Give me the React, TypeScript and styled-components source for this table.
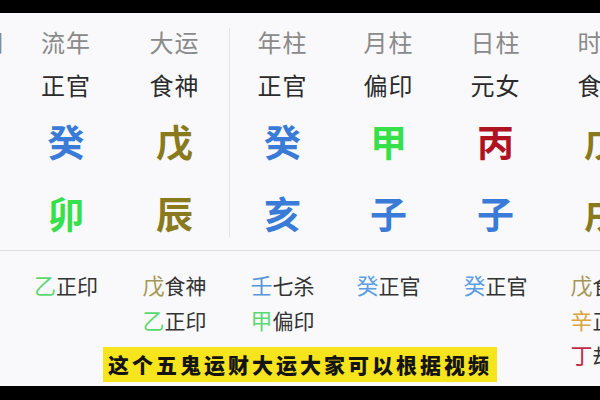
import React from "react";
import styled, { createGlobalStyle } from "styled-components";

const Global = createGlobalStyle`
  html, body { margin: 0; padding: 0; background: #000; }
  body { font-family: "Noto Sans CJK SC", "Noto Sans", sans-serif; }
`;

const Screen = styled.div`
  position: relative;
  width: 600px;
  height: 400px;
  overflow: hidden;
  background: #000;
  display: flex;
  flex-direction: column;
`;

const Bar = styled.div<{ $h: number }>`
  height: ${(p) => p.$h}px;
  flex: none;
  background: #000;
`;

const Content = styled.div`
  flex: 1;
  background: #f9f9fb;
  display: flex;
  flex-direction: column;
  overflow: hidden;
`;

const Upper = styled.div`
  height: 237px;
  flex: none;
  display: flex;
  margin-left: -96px;
  border-bottom: 1px solid #dedee2;
`;

const Column = styled.div<{ $w: number }>`
  width: ${(p) => p.$w}px;
  flex: none;
  display: flex;
  flex-direction: column;
  align-items: center;
`;

const Divider = styled.div`
  width: 1px;
  flex: none;
  margin-top: 15px;
  height: 209px;
  background: #e4e4e8;
`;

const Head = styled.div<{ $right?: boolean }>`
  height: 58px;
  line-height: 58px;
  font-size: 24px;
  color: #8a8a8a;
  letter-spacing: 1px;
  align-self: ${(p) => (p.$right ? "flex-end" : "center")};
  padding-right: ${(p) => (p.$right ? "8px" : "0")};
`;

const God = styled.div`
  height: 28px;
  line-height: 28px;
  font-size: 24px;
  color: #2b2b2b;
  letter-spacing: 1px;
`;

const Stem = styled.div<{ $c: string }>`
  height: 84px;
  line-height: 84px;
  font-size: 37px;
  font-weight: 700;
  color: ${(p) => p.$c};
`;

const Branch = styled.div<{ $c: string }>`
  height: 60px;
  line-height: 60px;
  font-size: 37px;
  font-weight: 700;
  color: ${(p) => p.$c};
`;

const Lower = styled.div`
  flex: 1;
  display: flex;
  margin-left: -96px;
  padding-top: 16px;
`;

const HiddenCol = styled.div<{ $w: number }>`
  width: ${(p) => p.$w}px;
  flex: none;
  display: flex;
  flex-direction: column;
  align-items: center;
`;

const HiddenRow = styled.div`
  height: 35px;
  line-height: 35px;
  font-size: 21px;
  color: #333;
  white-space: nowrap;
`;

const HStem = styled.span<{ $c: string }>`
  color: ${(p) => p.$c};
  font-size: 22px;
`;

const Subtitle = styled.div`
  position: absolute;
  left: 103px;
  top: 347px;
  width: 394px;
  height: 35px;
  background: #f6e41c;
  color: #141414;
  font-size: 21px;
  font-weight: 900;
  letter-spacing: 3px;
  line-height: 35px;
  text-align: center;
  white-space: nowrap;
`;

const C = {
  blue: "#3b7bd8",
  olive: "#8a7a1e",
  green: "#36e04a",
  red: "#b01222",
};

const H = {
  green: "#5cd873",
  olive: "#a69757",
  blue: "#5894d6",
  lblue: "#5c9ee4",
  gold: "#dba43e",
  crimson: "#c02c48",
};

type Pillar = {
  w: number;
  head: string;
  god: string;
  stem: [string, string];
  branch: [string, string];
  hidden: [string, string, string][];
};

const pillars: Pillar[] = [
  { w: 108, head: "流年", god: "正官", stem: ["癸", C.blue], branch: ["卯", C.green], hidden: [["乙", "正印", H.green]] },
  {
    w: 109,
    head: "大运",
    god: "食神",
    stem: ["戊", C.olive],
    branch: ["辰", C.olive],
    hidden: [
      ["戊", "食神", H.olive],
      ["乙", "正印", H.green],
    ],
  },
];

const pillars2: Pillar[] = [
  {
    w: 105,
    head: "年柱",
    god: "正官",
    stem: ["癸", C.blue],
    branch: ["亥", C.blue],
    hidden: [
      ["壬", "七杀", H.blue],
      ["甲", "偏印", H.green],
    ],
  },
  { w: 107, head: "月柱", god: "偏印", stem: ["甲", C.green], branch: ["子", C.blue], hidden: [["癸", "正官", H.lblue]] },
  { w: 107, head: "日柱", god: "元女", stem: ["丙", C.red], branch: ["子", C.blue], hidden: [["癸", "正官", H.lblue]] },
  {
    w: 107,
    head: "时柱",
    god: "食神",
    stem: ["戊", C.olive],
    branch: ["戌", C.olive],
    hidden: [
      ["戊", "食神", H.olive],
      ["辛", "正财", H.gold],
      ["丁", "劫财", H.crimson],
    ],
  },
];

const PillarCol = ({ p }: { p: Pillar }) => (
  <Column $w={p.w}>
    <Head>{p.head}</Head>
    <God>{p.god}</God>
    <Stem $c={p.stem[1]}>{p.stem[0]}</Stem>
    <Branch $c={p.branch[1]}>{p.branch[0]}</Branch>
  </Column>
);

const HiddenColumn = ({ p }: { p: Pillar }) => (
  <HiddenCol $w={p.w}>
    {p.hidden.map(([s, g, c], i) => (
      <HiddenRow key={i}>
        <HStem $c={c}>{s}</HStem>
        {g}
      </HiddenRow>
    ))}
  </HiddenCol>
);

export default function App() {
  return (
    <>
      <Global />
      <Screen>
        <Bar $h={13} />
        <Content>
          <Upper>
            <Column $w={108}>
              <Head $right>日期</Head>
            </Column>
            {pillars.map((p) => (
              <PillarCol key={p.head} p={p} />
            ))}
            <Divider />
            {pillars2.map((p) => (
              <PillarCol key={p.head} p={p} />
            ))}
          </Upper>
          <Lower>
            <HiddenCol $w={108} />
            {pillars.map((p) => (
              <HiddenColumn key={p.head} p={p} />
            ))}
            <HiddenCol $w={1} />
            {pillars2.map((p) => (
              <HiddenColumn key={p.head} p={p} />
            ))}
          </Lower>
        </Content>
        <Bar $h={14} />
        <Subtitle>这个五鬼运财大运大家可以根据视频</Subtitle>
      </Screen>
    </>
  );
}
